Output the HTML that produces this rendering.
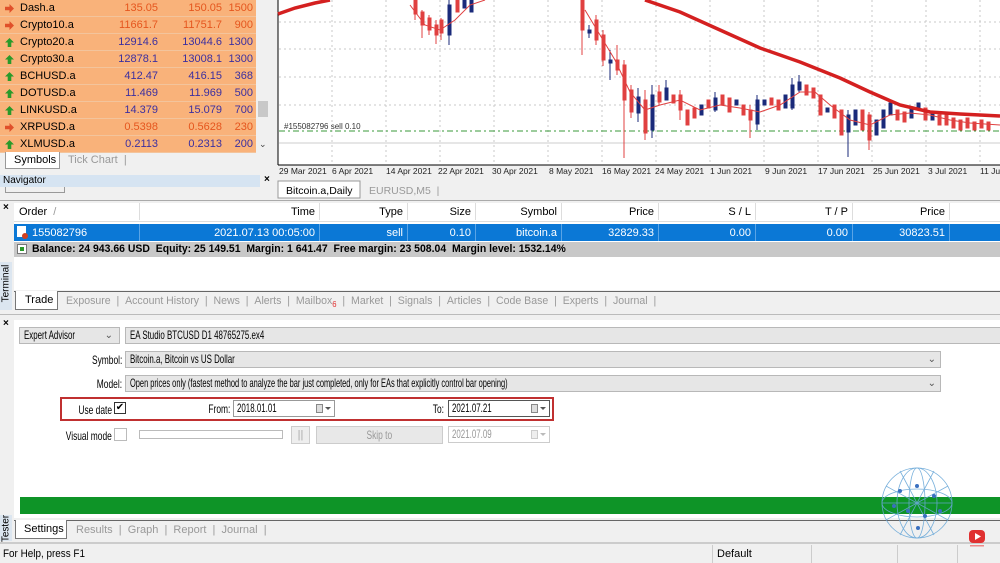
<!DOCTYPE html>
<html><head><meta charset="utf-8"><style>
*{margin:0;padding:0;box-sizing:border-box}
body{width:1000px;height:563px;overflow:hidden;background:#f0f0f0;font-family:"Liberation Sans",sans-serif;font-size:11px;color:#000;position:relative}
.a{position:absolute}
.row{position:absolute;left:0;width:256px;height:17px;background:#f9b27a;border-bottom:1px solid #f3c49c}
.row span{position:absolute;top:2px}
.n{left:20px}.b{right:98px}.k{right:34px}.s{right:3px}
.up{color:#3b2fa0}.dn{color:#e5561e}
.ico{position:absolute;left:5px;top:4px;width:9px;height:9px}
.th{position:absolute;top:0;height:17px;border-right:1px solid #ddd;text-align:right;padding:3px 4px 0 0}
.tab{position:absolute;color:#999;font-size:10.5px}
.inp{position:absolute;background:#e6e6e6;border:1px solid #b8b8b8;height:17px;padding:0 4px;font-size:12px;line-height:15px;white-space:nowrap}
.lbl{position:absolute;text-align:right;font-size:12px;white-space:nowrap}
.c{display:inline-block;transform:scaleX(.66);transform-origin:left center;white-space:nowrap}
.cr{display:inline-block;transform:scaleX(.7);transform-origin:right center;white-space:nowrap}
.dp{position:absolute;right:4px;top:3px;width:14px;height:10px}
.dp i{position:absolute;left:0;top:0;width:7px;height:9px;border:1px solid #888;background:#ddd}
.dp b{position:absolute;left:9px;top:3px;border-left:3px solid transparent;border-right:3px solid transparent;border-top:3px solid #555}
.dis .dp i{border-color:#ccc;background:#eee}.dis .dp b{border-top-color:#bbb}
.df{position:absolute;width:102px;height:17px;background:#fff;padding:0 3px;font-size:12px;line-height:15px}
</style></head><body>

<!-- Market watch -->
<div class="a" style="left:0;top:0;width:278px;height:200px;background:#f0f0f0"></div>
<div class="row" style="top:0"><svg class="ico" viewBox="0 0 10 10"><path d="M5 0L10 5 7 5 7 10 3 10 3 5 0 5z" fill="#e0502a" transform="rotate(90 5 5)"/></svg><span class="n">Dash.a</span><span class="b dn">135.05</span><span class="k dn">150.05</span><span class="s dn">1500</span></div>
<div class="row" style="top:17px"><svg class="ico" viewBox="0 0 10 10"><path d="M5 0L10 5 7 5 7 10 3 10 3 5 0 5z" fill="#e0502a" transform="rotate(90 5 5)"/></svg><span class="n">Crypto10.a</span><span class="b dn">11661.7</span><span class="k dn">11751.7</span><span class="s dn">900</span></div>
<div class="row" style="top:34px"><svg class="ico" viewBox="0 0 10 10"><path d="M5 0L10 5 7 5 7 10 3 10 3 5 0 5z" fill="#2a9a2a"/></svg><span class="n">Crypto20.a</span><span class="b up">12914.6</span><span class="k up">13044.6</span><span class="s up">1300</span></div>
<div class="row" style="top:51px"><svg class="ico" viewBox="0 0 10 10"><path d="M5 0L10 5 7 5 7 10 3 10 3 5 0 5z" fill="#2a9a2a"/></svg><span class="n">Crypto30.a</span><span class="b up">12878.1</span><span class="k up">13008.1</span><span class="s up">1300</span></div>
<div class="row" style="top:68px"><svg class="ico" viewBox="0 0 10 10"><path d="M5 0L10 5 7 5 7 10 3 10 3 5 0 5z" fill="#2a9a2a"/></svg><span class="n">BCHUSD.a</span><span class="b up">412.47</span><span class="k up">416.15</span><span class="s up">368</span></div>
<div class="row" style="top:85px"><svg class="ico" viewBox="0 0 10 10"><path d="M5 0L10 5 7 5 7 10 3 10 3 5 0 5z" fill="#2a9a2a"/></svg><span class="n">DOTUSD.a</span><span class="b up">11.469</span><span class="k up">11.969</span><span class="s up">500</span></div>
<div class="row" style="top:102px"><svg class="ico" viewBox="0 0 10 10"><path d="M5 0L10 5 7 5 7 10 3 10 3 5 0 5z" fill="#2a9a2a"/></svg><span class="n">LINKUSD.a</span><span class="b up">14.379</span><span class="k up">15.079</span><span class="s up">700</span></div>
<div class="row" style="top:119px"><svg class="ico" viewBox="0 0 10 10"><path d="M5 0L10 5 7 5 7 10 3 10 3 5 0 5z" fill="#e0502a" transform="rotate(90 5 5)"/></svg><span class="n">XRPUSD.a</span><span class="b dn">0.5398</span><span class="k dn">0.5628</span><span class="s dn">230</span></div>
<div class="row" style="top:136px"><svg class="ico" viewBox="0 0 10 10"><path d="M5 0L10 5 7 5 7 10 3 10 3 5 0 5z" fill="#2a9a2a"/></svg><span class="n">XLMUSD.a</span><span class="b up">0.2113</span><span class="k up">0.2313</span><span class="s up">200</span></div>
<div class="a" style="left:256px;top:0;width:14px;height:153px;background:#f0f0f0"></div>
<div class="a" style="left:258px;top:101px;width:10px;height:16px;background:#c8c8c8"></div>
<div class="a" style="left:259px;top:139px;font-size:9px;color:#444">⌄</div>
<div class="a" style="left:5px;top:152px;width:55px;height:17px;background:#fff;border:1px solid #999;border-top:none;padding:2px 0 0 8px">Symbols</div>
<div class="a" style="left:68px;top:154px;color:#999">Tick Chart &nbsp;|</div>
<div class="a" style="left:0;top:175px;width:260px;height:12px;background:#d6e4f2;font-size:10px;padding-left:3px;line-height:12px">Navigator</div>
<div class="a" style="left:264px;top:174px;font-size:10px;font-weight:bold">×</div>
<div class="a" style="left:5px;top:187px;width:60px;height:6px;border:1px solid #999;border-top:none"></div>

<!-- Chart -->
<svg class="a" style="left:270px;top:0" width="730" height="200">
<rect x="0" y="0" width="730" height="200" fill="#f0f0f0"/>
<rect x="8" y="0" width="722" height="165" fill="#fff"/>
<line x1="8" y1="0" x2="8" y2="165" stroke="#000"/>
<g stroke="#c8c8c8" stroke-dasharray="2,3">
<line x1="9" y1="22" x2="730" y2="22"/><line x1="9" y1="49" x2="730" y2="49"/><line x1="9" y1="77" x2="730" y2="77"/><line x1="9" y1="105" x2="730" y2="105"/>
<line x1="62" y1="0" x2="62" y2="165"/><line x1="116" y1="0" x2="116" y2="165"/><line x1="170" y1="0" x2="170" y2="165"/><line x1="224" y1="0" x2="224" y2="165"/><line x1="278" y1="0" x2="278" y2="165"/><line x1="332" y1="0" x2="332" y2="165"/><line x1="386" y1="0" x2="386" y2="165"/><line x1="440" y1="0" x2="440" y2="165"/><line x1="494" y1="0" x2="494" y2="165"/><line x1="548" y1="0" x2="548" y2="165"/><line x1="602" y1="0" x2="602" y2="165"/><line x1="656" y1="0" x2="656" y2="165"/><line x1="710" y1="0" x2="710" y2="165"/>
</g>
<line x1="9" y1="143" x2="730" y2="143" stroke="#ccc"/>
<line x1="9" y1="131" x2="730" y2="131" stroke="#3a9a3a" stroke-dasharray="6,3,2,3"/>
<text x="14" y="129" font-size="8" fill="#333">#155082796 sell 0.10</text>
<g transform="translate(-270,0)">
<g stroke-width="1">
<g fill="#e04040" stroke="#e04040">
<line x1="415" y1="0" x2="415" y2="20"/><rect x="414" y="0" width="3" height="14"/>
<line x1="422" y1="10" x2="422" y2="38"/><rect x="421" y="12" width="3" height="13"/>
<line x1="429" y1="15" x2="429" y2="35"/><rect x="428" y="18" width="3" height="12"/>
<line x1="436" y1="20" x2="436" y2="44"/><rect x="435" y="25" width="3" height="10"/>
<line x1="441" y1="18" x2="441" y2="40"/><rect x="440" y="20" width="3" height="13"/>
<rect x="456" y="0" width="3" height="12"/>
<line x1="582" y1="0" x2="582" y2="55"/><rect x="581" y="0" width="3" height="30"/>
<line x1="596" y1="15" x2="596" y2="45"/><rect x="595" y="20" width="3" height="20"/>
<line x1="603" y1="30" x2="603" y2="66"/><rect x="602" y="35" width="3" height="25"/>
<line x1="617" y1="45" x2="617" y2="75"/><rect x="616" y="60" width="3" height="10"/>
<line x1="624" y1="60" x2="624" y2="158"/><rect x="623" y="65" width="3" height="35"/>
<line x1="631" y1="85" x2="631" y2="118"/><rect x="630" y="90" width="3" height="22"/>
<line x1="645" y1="90" x2="645" y2="140"/><rect x="644" y="100" width="3" height="33"/>
<line x1="659" y1="85" x2="659" y2="105"/><rect x="658" y="92" width="3" height="10"/>
<rect x="672" y="95" width="3" height="8"/>
<line x1="680" y1="90" x2="680" y2="120"/><rect x="679" y="95" width="3" height="15"/>
<rect x="686" y="110" width="3" height="15"/><rect x="693" y="108" width="3" height="10"/>
<rect x="707" y="100" width="3" height="8"/><rect x="721" y="95" width="3" height="10"/>
<rect x="728" y="98" width="3" height="14"/><rect x="742" y="105" width="3" height="10"/>
<line x1="750" y1="105" x2="750" y2="138"/><rect x="749" y="110" width="3" height="10"/>
<rect x="770" y="98" width="3" height="7"/><rect x="777" y="100" width="3" height="10"/>
<rect x="805" y="85" width="3" height="10"/><rect x="812" y="88" width="3" height="10"/>
<rect x="819" y="95" width="3" height="20"/><rect x="833" y="105" width="3" height="13"/>
<rect x="840" y="110" width="3" height="25"/><rect x="861" y="110" width="3" height="20"/>
<line x1="869" y1="112" x2="869" y2="150"/><rect x="868" y="115" width="3" height="25"/>
<rect x="896" y="110" width="3" height="10"/><rect x="903" y="112" width="3" height="10"/>
<rect x="924" y="108" width="3" height="12"/><rect x="938" y="115" width="3" height="10"/>
<rect x="945" y="115" width="3" height="10"/><rect x="952" y="118" width="3" height="10"/>
<rect x="959" y="120" width="3" height="10"/><rect x="966" y="118" width="3" height="10"/>
<rect x="973" y="122" width="3" height="8"/><rect x="980" y="120" width="3" height="8"/><rect x="987" y="122" width="3" height="8"/>
</g>
<g fill="#1a2a7a" stroke="#1a2a7a">
<line x1="449" y1="0" x2="449" y2="45"/><rect x="448" y="5" width="3" height="30"/>
<rect x="463" y="0" width="3" height="8"/><rect x="470" y="0" width="3" height="12"/>
<line x1="589" y1="25" x2="589" y2="38"/><rect x="588" y="30" width="3" height="3"/>
<line x1="610" y1="50" x2="610" y2="80"/><rect x="609" y="60" width="3" height="3"/>
<line x1="638" y1="88" x2="638" y2="122"/><rect x="637" y="97" width="3" height="16"/>
<line x1="652" y1="85" x2="652" y2="138"/><rect x="651" y="95" width="3" height="35"/>
<line x1="666" y1="80" x2="666" y2="100"/><rect x="665" y="88" width="3" height="12"/>
<rect x="700" y="105" width="3" height="10"/><line x1="715" y1="92" x2="715" y2="112"/><rect x="714" y="98" width="3" height="12"/>
<rect x="735" y="100" width="3" height="5"/><line x1="757" y1="95" x2="757" y2="130"/><rect x="756" y="100" width="3" height="24"/>
<rect x="763" y="100" width="3" height="5"/><rect x="784" y="95" width="3" height="13"/>
<line x1="792" y1="78" x2="792" y2="110"/><rect x="791" y="85" width="3" height="23"/>
<line x1="799" y1="75" x2="799" y2="92"/><rect x="798" y="82" width="3" height="8"/>
<rect x="826" y="108" width="3" height="4"/>
<line x1="848" y1="110" x2="848" y2="157"/><rect x="847" y="115" width="3" height="17"/>
<rect x="854" y="110" width="3" height="15"/><rect x="875" y="120" width="3" height="15"/>
<rect x="882" y="110" width="3" height="18"/><rect x="889" y="103" width="3" height="12"/>
<rect x="910" y="108" width="3" height="10"/><rect x="917" y="103" width="3" height="7"/><rect x="931" y="112" width="3" height="8"/>
</g>
</g>
<polyline fill="none" stroke="#e04040" stroke-width="1" points="410,5 425,25 440,30 455,20 470,5 485,0"/>
<polyline fill="none" stroke="#e04040" stroke-width="1" points="585,10 600,35 615,60 630,92 645,110 660,105 680,100 700,110 720,105 740,108 760,112 780,105 800,92 815,92 830,105 850,120 870,125 890,115 910,113 930,115 950,120 970,123 1000,125"/>
<polyline fill="none" stroke="#d42020" stroke-width="3.5" points="278,14 295,8 315,3 330,0"/>
<polyline fill="none" stroke="#d42020" stroke-width="3.5" points="645,0 680,12 720,30 760,48 800,62 840,78 870,92 900,105 930,112 960,114 1000,116"/>
</g>
<line x1="8" y1="165" x2="730" y2="165" stroke="#000"/>
<g font-size="8.5" fill="#222">
<text x="9" y="174">29 Mar 2021</text><text x="62" y="174">6 Apr 2021</text><text x="116" y="174">14 Apr 2021</text><text x="168" y="174">22 Apr 2021</text><text x="222" y="174">30 Apr 2021</text><text x="279" y="174">8 May 2021</text><text x="332" y="174">16 May 2021</text><text x="385" y="174">24 May 2021</text><text x="440" y="174">1 Jun 2021</text><text x="495" y="174">9 Jun 2021</text><text x="548" y="174">17 Jun 2021</text><text x="603" y="174">25 Jun 2021</text><text x="658" y="174">3 Jul 2021</text><text x="710" y="174">11 Ju</text>
</g>
<rect x="8" y="181" width="82" height="17" fill="#fff" stroke="#999"/>
<text x="16" y="194" font-size="10.5">Bitcoin.a,Daily</text>
<text x="99" y="194" font-size="10.5" fill="#999">EURUSD,M5 &#160;|</text>
</svg>

<!-- Terminal -->
<div class="a" style="left:0;top:200px;width:1000px;height:115px;background:#f0f0f0;border-top:1px solid #aaa"></div>
<div class="a" style="left:3px;top:202px;font-size:10px;font-weight:bold">×</div>
<div class="a" style="left:0;top:262px;width:12px;height:48px;background:#dce6f0"></div>
<div class="a" style="left:-16px;top:278px;transform:rotate(-90deg);font-size:10px;width:44px;text-align:center">Terminal</div>
<div class="a" style="left:14px;top:203px;width:986px;height:87px;background:#fff"></div>
<div class="a" style="left:14px;top:203px;width:986px;height:19px;border-bottom:1px solid #ddd">
<div class="th" style="left:0;width:126px;text-align:left;padding-left:5px">Order &nbsp;<span style="color:#999">/</span></div>
<div class="th" style="left:126px;width:180px">Time</div>
<div class="th" style="left:306px;width:88px">Type</div>
<div class="th" style="left:394px;width:68px">Size</div>
<div class="th" style="left:462px;width:86px">Symbol</div>
<div class="th" style="left:548px;width:97px">Price</div>
<div class="th" style="left:645px;width:97px">S / L</div>
<div class="th" style="left:742px;width:97px">T / P</div>
<div class="th" style="left:839px;width:97px">Price</div>
<div class="th" style="left:936px;width:60px;text-align:left;padding-left:50px">Co</div>
</div>
<div class="a" style="left:14px;top:224px;width:986px;height:17px;background:#0b78d6;color:#fff">
<svg class="a" style="left:3px;top:2px" width="11" height="13"><rect x="0" y="0" width="9" height="11" fill="#fff"/><circle cx="8" cy="10" r="3" fill="#d04020"/></svg>
<div class="th" style="left:0;width:126px;text-align:left;padding-left:18px;border-color:#5aa4e6">155082796</div>
<div class="th" style="left:126px;width:180px;border-color:#5aa4e6">2021.07.13 00:05:00</div>
<div class="th" style="left:306px;width:88px;border-color:#5aa4e6">sell</div>
<div class="th" style="left:394px;width:68px;border-color:#5aa4e6">0.10</div>
<div class="th" style="left:462px;width:86px;border-color:#5aa4e6">bitcoin.a</div>
<div class="th" style="left:548px;width:97px;border-color:#5aa4e6">32829.33</div>
<div class="th" style="left:645px;width:97px;border-color:#5aa4e6">0.00</div>
<div class="th" style="left:742px;width:97px;border-color:#5aa4e6">0.00</div>
<div class="th" style="left:839px;width:97px;border-color:#5aa4e6">30823.51</div>
</div>
<div class="a" style="left:14px;top:242px;width:986px;height:15px;background:#c8c8c8;font-weight:bold;padding:1px 0 0 18px"><span style="display:inline-block;transform:scaleX(.95);transform-origin:left center;white-space:nowrap">Balance: 24 943.66 USD&nbsp; Equity: 25 149.51&nbsp; Margin: 1 641.47&nbsp; Free margin: 23 508.04&nbsp; Margin level: 1532.14%</span></div>
<div class="a" style="left:17px;top:244px;width:10px;height:10px;background:#fff;border:1px solid #777"><div style="margin:2px;width:4px;height:4px;background:#2a9a2a"></div></div>
<div class="a" style="left:14px;top:291px;width:986px;height:1px;background:#666"></div>
<div class="a" style="left:15px;top:291px;width:43px;height:19px;background:#fff;border:1px solid #777;border-top:none;padding:3px 0 0 9px">Trade</div>
<div class="tab" style="left:66px;top:295px;font-size:11px"><span style="display:inline-block;transform:scaleX(.96);transform-origin:left center;white-space:nowrap">Exposure &nbsp;| &nbsp;Account History &nbsp;| &nbsp;News &nbsp;| &nbsp;Alerts &nbsp;| &nbsp;Mailbox<sub style="color:#e03030;font-size:8px">6</sub> &nbsp;| &nbsp;Market &nbsp;| &nbsp;Signals &nbsp;| &nbsp;Articles &nbsp;| &nbsp;Code Base &nbsp;| &nbsp;Experts &nbsp;| &nbsp;Journal &nbsp;|</span></div>
<div class="a" style="left:0;top:314px;width:1000px;height:1px;background:#bbb"></div>

<!-- Tester -->
<div class="a" style="left:3px;top:318px;font-size:10px;font-weight:bold">×</div>
<div class="a" style="left:0;top:515px;width:12px;height:26px;background:#dce6f0"></div>
<div class="a" style="left:-8px;top:523px;transform:rotate(-90deg);font-size:10px;width:28px;text-align:center">Tester</div>
<div class="a" style="left:14px;top:320px;width:986px;height:198px;background:#fff"></div>
<div class="inp" style="left:19px;top:327px;width:101px"><span class="c">Expert Advisor</span><span style="position:absolute;right:6px;color:#555;font-size:10px">⌄</span></div>
<div class="inp" style="left:125px;top:327px;width:880px"><span class="c">EA Studio BTCUSD D1 48765275.ex4</span></div>
<div class="lbl" style="left:60px;top:353px;width:62px"><span class="cr">Symbol:</span></div>
<div class="inp" style="left:125px;top:351px;width:816px"><span class="c">Bitcoin.a, Bitcoin vs US Dollar</span><span style="position:absolute;right:4px;color:#555;font-size:10px">⌄</span></div>
<div class="lbl" style="left:60px;top:377px;width:62px"><span class="cr">Model:</span></div>
<div class="inp" style="left:125px;top:375px;width:816px"><span class="c" style="transform:scaleX(.62)">Open prices only (fastest method to analyze the bar just completed, only for EAs that explicitly control bar opening)</span><span style="position:absolute;right:4px;color:#555;font-size:10px">⌄</span></div>
<div class="a" style="left:60px;top:397px;width:494px;height:24px;border:2px solid #c03030"></div>
<div class="lbl" style="left:60px;top:403px;width:52px"><span class="cr">Use date</span></div>
<div class="a" style="left:114px;top:402px;width:12px;height:12px;border:1px solid #333;background:#fff;font-size:10px;line-height:10px;text-align:center">✔</div>
<div class="lbl" style="left:190px;top:402px;width:40px"><span class="cr">From:</span></div>
<div class="df" style="left:233px;top:400px;border:1px solid #999"><span class="c">2018.01.01</span><span class="dp"><i></i><b></b></span></div>
<div class="lbl" style="left:400px;top:402px;width:44px"><span class="cr">To:</span></div>
<div class="df" style="left:448px;top:400px;border:1px solid #555"><span class="c">2021.07.21</span><span class="dp"><i></i><b></b></span></div>
<div class="lbl" style="left:40px;top:429px;width:72px"><span class="cr">Visual mode</span></div>
<div class="a" style="left:114px;top:428px;width:13px;height:13px;border:1px solid #bbb;background:#fff"></div>
<div class="a" style="left:139px;top:430px;width:144px;height:9px;border:1px solid #bbb"></div>
<div class="a" style="left:291px;top:426px;width:19px;height:18px;border:1px solid #ccc;background:#eee;color:#aaa;text-align:center;line-height:16px">||</div>
<div class="a" style="left:316px;top:426px;width:127px;height:18px;border:1px solid #ccc;background:#e8e8e8;color:#999;text-align:center;line-height:16px;font-size:12px"><span style="display:inline-block;transform:scaleX(.7)">Skip to</span></div>
<div class="df dis" style="left:448px;top:426px;border:1px solid #ccc;color:#999"><span class="c">2021.07.09</span><span class="dp"><i></i><b></b></span></div>
<div class="a" style="left:20px;top:497px;width:980px;height:17px;background:#0e9427"></div>
<div class="a" style="left:14px;top:520px;width:986px;height:1px;background:#666"></div>
<div class="a" style="left:15px;top:520px;width:52px;height:19px;background:#fff;border:1px solid #777;border-top:none;padding:3px 0 0 8px">Settings</div>
<div class="tab" style="left:76px;top:524px;font-size:11px">Results &nbsp;| &nbsp;Graph &nbsp;| &nbsp;Report &nbsp;| &nbsp;Journal &nbsp;|</div>
<div class="a" style="left:0;top:542px;width:1000px;height:2px;background:#ccc"></div>
<div class="a" style="left:0;top:544px;width:1000px;height:19px;background:#f0f0f0;padding:4px 0 0 3px"><span class="c" style="transform:scaleX(.9);font-size:11px">For Help, press F1</span></div>
<div class="a" style="left:712px;top:545px;width:1px;height:18px;background:#ccc"></div>
<div class="a" style="left:717px;top:548px">Default</div>
<div class="a" style="left:811px;top:545px;width:1px;height:18px;background:#ccc"></div>
<div class="a" style="left:897px;top:545px;width:1px;height:18px;background:#ccc"></div>
<div class="a" style="left:957px;top:545px;width:1px;height:18px;background:#ccc"></div>
<!-- globe -->
<svg class="a" style="left:880px;top:466px" width="74" height="74" viewBox="0 0 74 74">
<g fill="none" stroke="#6aa8d8" stroke-width="0.8" opacity="0.9">
<circle cx="37" cy="37" r="35"/><ellipse cx="37" cy="37" rx="20" ry="35"/><ellipse cx="37" cy="37" rx="8" ry="35"/><ellipse cx="37" cy="37" rx="35" ry="14"/><line x1="2" y1="37" x2="72" y2="37"/><path d="M6 20L68 54M6 54L68 20M20 5L54 69M54 5L20 69"/>
</g>
<g fill="#3a70c0"><circle cx="20" cy="25" r="2"/><circle cx="37" cy="20" r="2"/><circle cx="54" cy="30" r="2"/><circle cx="28" cy="45" r="2"/><circle cx="45" cy="50" r="2"/><circle cx="60" cy="45" r="2"/><circle cx="14" cy="40" r="2"/><circle cx="38" cy="62" r="2"/></g>
</svg>
<svg class="a" style="left:967px;top:530px" width="20" height="18"><rect x="2" y="0" width="16" height="13" rx="4" fill="#e03030"/><path d="M8 3L14 6.5 8 10z" fill="#fff"/><rect x="3" y="15" width="14" height="1.5" fill="#e88"/></svg>
</body></html>
